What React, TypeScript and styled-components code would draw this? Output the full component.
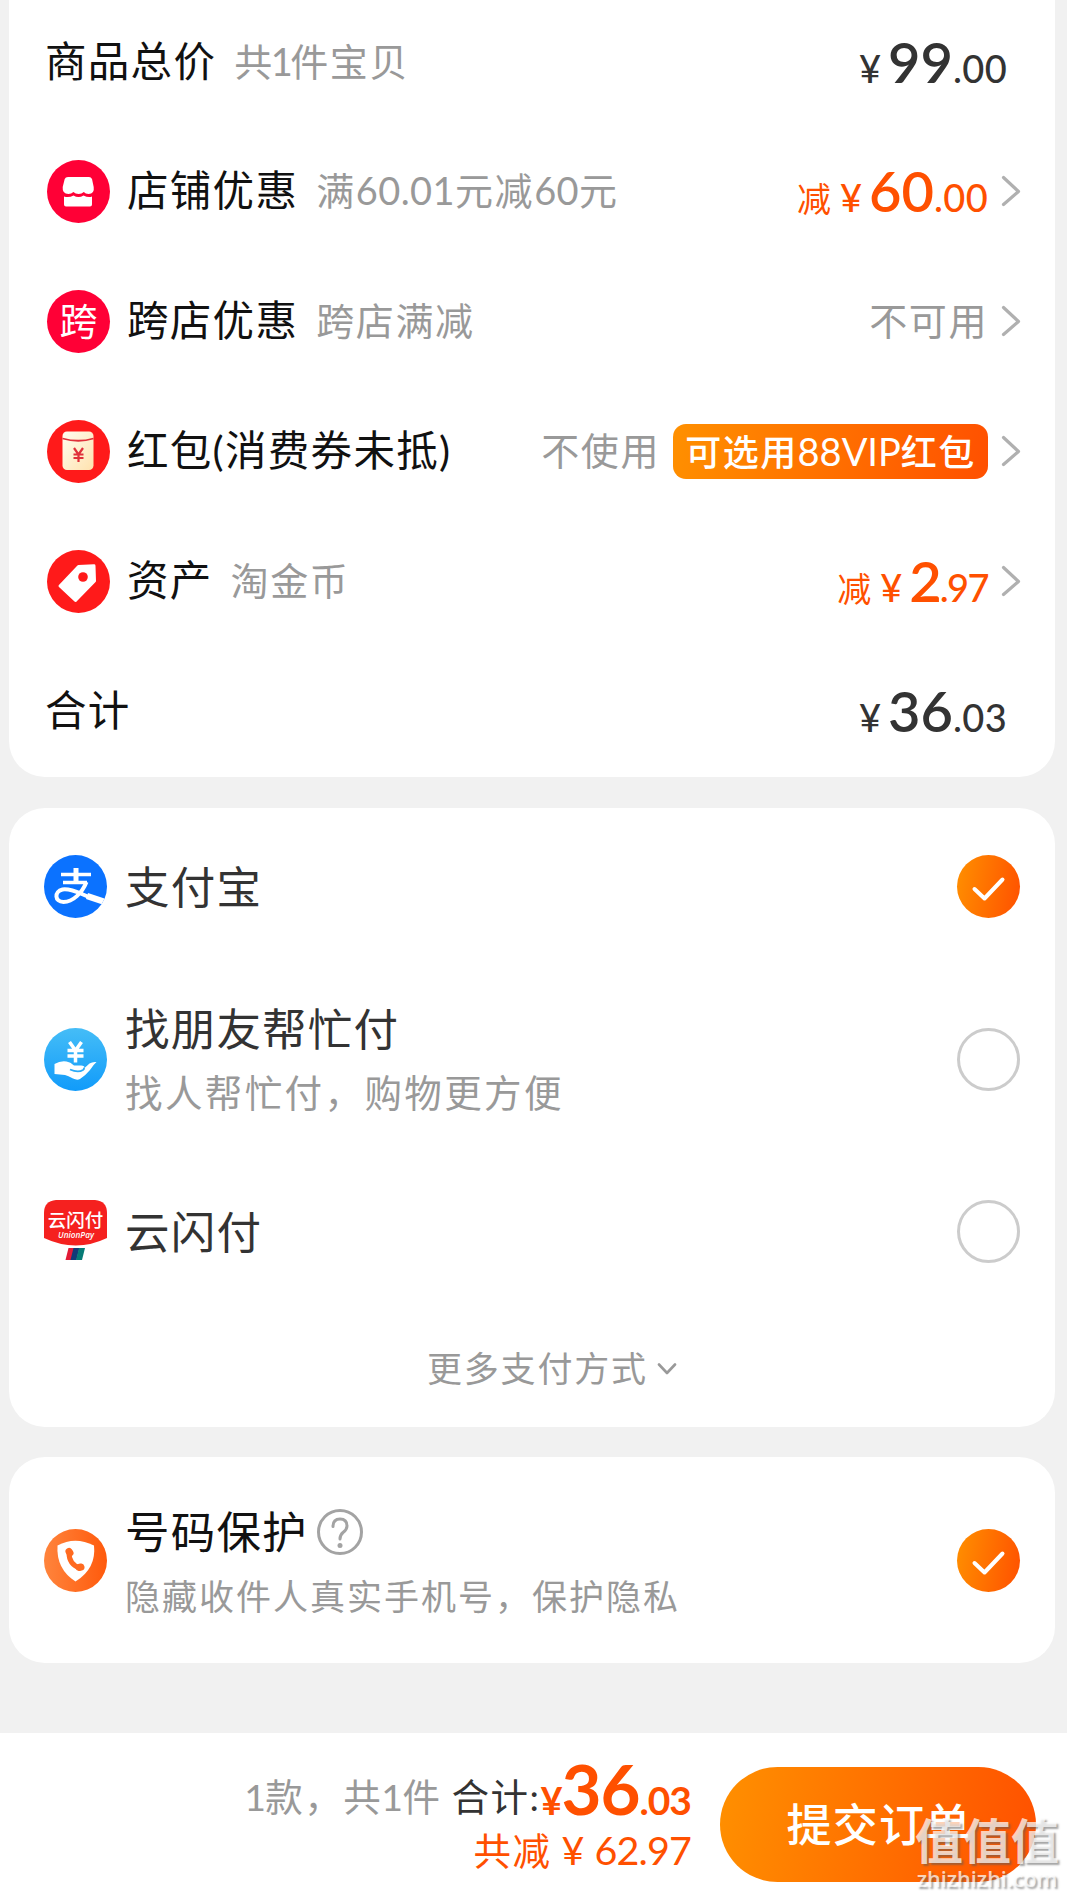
import React from "react";
import styled, { createGlobalStyle } from "styled-components";

const Global = createGlobalStyle`
  * { box-sizing: border-box; }
  body {
    margin: 0;
    background: #f1f1f1;
    font-family: Lato, "Noto Sans CJK SC", sans-serif;
    color: #111;
  }
  svg { display: block; flex: none; }
`;

const Page = styled.main`
  width: 1067px;
  height: 1899px;
  display: flex;
  flex-direction: column;
  overflow: hidden;
  background: #f1f1f1;
`;

const Card = styled.section<{ $h: number; $gap?: number; $flatTop?: boolean }>`
  flex: none;
  width: 1046px;
  height: ${(p) => p.$h}px;
  margin: ${(p) => p.$gap ?? 0}px 0 0 9px;
  background: #fff;
  border-radius: ${(p) => (p.$flatTop ? "0 0 36px 36px" : "36px")};
  display: flex;
  flex-direction: column;
`;

const Row = styled.div<{ $h?: number; $left?: number; $right?: number; $below?: number }>`
  flex: none;
  height: ${(p) => p.$h ?? 130}px;
  margin-bottom: ${(p) => p.$below ?? 0}px;
  padding: 0 ${(p) => p.$right ?? 34}px 0 ${(p) => p.$left ?? 38}px;
  display: flex;
  align-items: center;
`;

const Label = styled.span<{ $icon?: boolean }>`
  margin-left: ${(p) => (p.$icon ? 17 : -2)}px;
  margin-bottom: 2px;
  font-size: 41.5px;
  line-height: 60px;
  letter-spacing: 1.3px;
  white-space: nowrap;
`;

const Hint = styled.span`
  margin-left: 18px;
  margin-bottom: 2px;
  font-size: 38px;
  line-height: 60px;
  letter-spacing: 1.6px;
  color: #999;
  white-space: nowrap;
`;

const Digits = styled.span<{ $nudge?: number }>`
  letter-spacing: 0.4px;
  margin: 0 ${(p) => p.$nudge ?? 0}px;
`;

const Side = styled.div<{ $gap: number }>`
  margin-left: auto;
  display: flex;
  align-items: center;
  gap: ${(p) => p.$gap}px;
`;

const Price = styled.span<{ $accent?: boolean }>`
  display: flex;
  align-items: baseline;
  height: 60px;
  margin-bottom: 2px;
  line-height: 62px;
  color: ${(p) => (p.$accent ? "#ff5000" : "#333")};
`;
const Cut = styled.span`
  font-size: 34px;
  margin-right: 9px;
`;
const Yen = styled.span`
  font-size: 38px;
  font-weight: 500;
  margin-right: 7px;
`;
const Whole = styled.span`
  font-size: 56px;
  font-weight: 600;
`;
const Cents = styled.span<{ $tight?: boolean }>`
  font-size: 38px;
  font-weight: 500;
  letter-spacing: ${(p) => (p.$tight ? -1.6 : 0.3)}px;
  margin-left: ${(p) => (p.$tight ? -2 : 0)}px;
`;

const Coupon = styled.span`
  width: 315px;
  height: 55px;
  border-radius: 13px;
  background: linear-gradient(100deg, #ff9000, #ff5000);
  color: #fff;
  display: flex;
  align-items: baseline;
  justify-content: center;
  font-size: 36px;
  font-weight: 500;
  line-height: 54px;
  letter-spacing: 1.4px;
  white-space: nowrap;
`;
const Vip = styled.span`
  font-size: 38px;
  font-weight: 400;
  letter-spacing: 0;
`;

const Titles = styled.div<{ $drop?: number }>`
  margin-left: 18px;
  padding-top: ${(p) => p.$drop ?? 0}px;
  display: flex;
  flex-direction: column;
`;
const Title = styled.div<{ $strong?: boolean }>`
  display: flex;
  align-items: center;
  gap: 9px;
  font-size: 44.5px;
  line-height: 66px;
  letter-spacing: 1.2px;
  color: ${(p) => (p.$strong ? "#111" : "#333")};
`;
const Sub = styled.div<{ $small?: boolean }>`
  font-size: ${(p) => (p.$small ? 35 : 37.5)}px;
  line-height: 62px;
  letter-spacing: ${(p) => (p.$small ? 2 : 2.4)}px;
  color: #999;
  white-space: nowrap;
`;

const Radio = styled.span`
  width: 63px;
  height: 63px;
  margin-left: auto;
  border: 3px solid #ccc;
  border-radius: 50%;
`;
const Checked = styled.span`
  width: 63px;
  height: 63px;
  margin-left: auto;
  border-radius: 50%;
  background: linear-gradient(100deg, #ff9000, #ff5000);
`;

const More = styled.div`
  display: flex;
  align-items: center;
  height: 60px;
  margin: 27px 0 0 418px;
  gap: 9px;
  font-size: 35px;
  letter-spacing: 1.8px;
  color: #999;

  svg { margin-top: 5px; }
`;

const Bar = styled.footer`
  position: relative;
  margin-top: auto;
  height: 166px;
  background: #fff;
  display: flex;
  padding-right: 31px;
  justify-content: flex-end;
`;
const Summary = styled.div`
  margin-right: 29px;
  display: flex;
  flex-direction: column;
  align-items: flex-end;
`;
const TotalLine = styled.div`
  height: 96px;
  line-height: 112px;
  white-space: nowrap;
`;
const Count = styled.span<{ $dark?: boolean }>`
  color: ${(p) => (p.$dark ? "#333" : "#999")};
  margin-right: ${(p) => (p.$dark ? 0 : 10)}px;
  font-size: 37.5px;
  line-height: 40px;
  letter-spacing: 1.5px;
  vertical-align: 4px;
`;
const Hot = styled.span<{ $size: number }>`
  color: #ff5000;
  font-weight: 700;
  font-size: ${(p) => p.$size}px;
  letter-spacing: -1px;
`;
const SavedLine = styled.div`
  display: flex;
  align-items: baseline;
  gap: 10px;
  height: 60px;
  line-height: 42px;
  font-size: 39.5px;
  color: #ff5000;
`;
const SavedLabel = styled.span`
  font-size: 37.5px;
  letter-spacing: 1.5px;
`;
const SavedSum = styled.span`
  letter-spacing: -0.9px;
`;
const Submit = styled.button`
  width: 316px;
  height: 115px;
  margin-top: 34px;
  padding: 0 0 4px 2px;
  border: 0;
  border-radius: 58px;
  background: linear-gradient(100deg, #ff9000, #ff5000);
  color: #fff;
  font-family: inherit;
  font-size: 45px;
  font-weight: 500;
  letter-spacing: 1.3px;
`;
const Watermark = styled.div`
  position: absolute;
  left: 914px;
  top: 83px;
  width: 146px;
  display: flex;
  flex-direction: column;
  align-items: center;
  color: rgba(255, 255, 255, 0.72);
  text-shadow: 2px 2px 2px rgba(90, 90, 90, 0.55);
  white-space: nowrap;
`;
const MarkTop = styled.span`
  font-size: 48px;
  font-weight: 700;
  line-height: 50px;
`;
const MarkBottom = styled.span`
  font-family: "Open Sans", sans-serif;
  font-size: 21.6px;
  font-weight: 600;
  line-height: 26px;
`;

const Chevron = () => (
  <svg width="20" height="32" viewBox="0 0 20 32" fill="none" stroke="#b0b0b0" strokeWidth="3.2" strokeLinecap="round" strokeLinejoin="round">
    <path d="M2.500 2.500 17.500 16.500 2.500 29.500" />
  </svg>
);

const Tick = () => (
  <Checked>
    <svg width="63" height="63" viewBox="0 0 63 63" fill="none" stroke="#fff" strokeWidth="4" strokeLinecap="round" strokeLinejoin="round">
      <path d="M17.500 34 27.500 43.500 45.500 24.500" />
    </svg>
  </Checked>
);

const ShopIcon = () => (
  <svg width="63" height="63" viewBox="0 0 63 63">
    <circle cx="31.500" cy="31.500" r="31.500" fill="#ff0036" />
    <path fill="#fff" d="M21 17h21q2 0 3 2l1.700 8q1 7-5.200 7-3 0-4.700-2-2 2-5.200 2t-5.200-2q-2 2-5 2-6.300 0-5.700-7l2-8q.8-2 3.300-2z" />
    <path fill="#fff" d="M17 36.500q5 1.500 9.500-1 5 3 10 0 5 2.500 8.500 1v8q0 2-2 2H19q-2 0-2-2z" />
  </svg>
);

const GlyphBadge = styled.span`
  width: 63px;
  height: 63px;
  border-radius: 50%;
  background: #ff0036;
  color: #fff;
  font-size: 38px;
  line-height: 61px;
  text-align: center;
`;

const EnvelopeIcon = () => (
  <svg width="63" height="63" viewBox="0 0 63 63">
    <defs>
      <linearGradient id="paper" x1="0" y1="0" x2="1" y2="1">
        <stop offset="0" stopColor="#fffdf0" />
        <stop offset="1" stopColor="#ffe2ae" />
      </linearGradient>
    </defs>
    <circle cx="31.500" cy="31.500" r="31.500" fill="#ff1a1a" />
    <rect x="15.500" y="11.500" width="31" height="38.500" rx="4.500" fill="url(#paper)" />
    <path d="M15.500 18.500q16 4.500 31 0" fill="none" stroke="#e0303a" strokeWidth="1.800" />
    <path d="M27 28l4.500 6.500L36 28M31.500 34.500v7.500M26.500 34.500h10M26.500 38h10" fill="none" stroke="#e0303a" strokeWidth="2.200" />
  </svg>
);

const TagIcon = () => (
  <svg width="63" height="63" viewBox="0 0 63 63">
    <circle cx="31.500" cy="31.500" r="31.500" fill="#ff1a1a" />
    <path fill="#fff" stroke="#fff" strokeWidth="3" strokeLinejoin="round" d="M31.500 16.500 47 15.800 47.500 31 28.500 50.500 13 36z" />
    <circle cx="36" cy="27" r="4.800" fill="#ff1a1a" />
  </svg>
);

const AlipayIcon = () => (
  <svg width="63" height="63" viewBox="0 0 63 63">
    <defs><clipPath id="disc"><circle cx="31.500" cy="31.500" r="31.500" /></clipPath></defs>
    <circle cx="31.500" cy="31.500" r="31.500" fill="#0b72ff" />
    <g clipPath="url(#disc)" fill="none" stroke="#fff" strokeWidth="4">
      <path d="M32 13v14" strokeWidth="5" />
      <path d="M17 19.500h30M19 27.500h24" strokeWidth="3.400" />
      <path d="M42.500 27C38 38 29 47 19.500 47c-9 0-9.500-10.500-1-12.500C26.500 33 36 38.500 45 42" />
      <path d="M43 41l18 6" strokeWidth="6.500" />
    </g>
  </svg>
);

const FriendIcon = () => (
  <svg width="63" height="63" viewBox="0 0 63 63">
    <defs>
      <linearGradient id="sky" x1="0" y1="0" x2="0" y2="1">
        <stop offset="0" stopColor="#45bdf7" />
        <stop offset="1" stopColor="#119bfa" />
      </linearGradient>
    </defs>
    <circle cx="31.500" cy="31.500" r="31.500" fill="url(#sky)" />
    <path d="M25.500 14l6 8.500L37.500 14M31.500 22v12.500M23.500 22.500h16M23.500 28h16" fill="none" stroke="#fff" strokeWidth="3.500" />
    <path fill="#fff" d="M10.500 36q6-3.500 12-2.500 4 .7 7.500 4h7q4 0 3.500 2.500l5-4.500q3-2 7-1.500-3 2.500-6.500 8-5 6-10 9-3 1.500-7-.5-5-3-8-3.500-5-.5-10.500-1z" />
    <path d="M26 41.500q8 3.500 13 .5 1.500-1 1-2.500" fill="none" stroke="#2aaaf8" strokeWidth="1.800" />
  </svg>
);

const UnionPayIcon = () => (
  <svg width="63" height="63" viewBox="0 0 63 63">
    <path fill="#f5211f" d="M12 0h39q12 1 12 13v25Q32 53 0 38V13Q0 1 12 0z" />
    <text x="31.500" y="26.500" fill="#fff" fontSize="18.500" fontWeight="500" textAnchor="middle" fontFamily="Noto Sans CJK SC">云闪付</text>
    <text x="32" y="37.500" fill="#fff" fontSize="8.200" fontStyle="italic" fontWeight="600" textAnchor="middle" fontFamily="Open Sans">UnionPay</text>
    <path fill="#e21b36" d="M24.500 48h6l-3 12h-6z" />
    <path fill="#123a78" d="M29.500 48h6l-3 12h-6z" />
    <path fill="#067b76" d="M35 48h6l-3 12h-6z" />
  </svg>
);

const ShieldIcon = () => (
  <svg width="63" height="63" viewBox="0 0 63 63">
    <defs>
      <linearGradient id="amber" x1="0" y1="0.500" x2="1" y2="0.500">
        <stop offset="0" stopColor="#ff843c" />
        <stop offset="1" stopColor="#ff5a0c" />
      </linearGradient>
    </defs>
    <circle cx="31.500" cy="31.500" r="31.500" fill="url(#amber)" />
    <path fill="#fff" d="M13.500 16.500Q31 7 50 16.500q2.500 23-18.500 36Q12 40 13.500 16.500z" />
    <path fill="none" stroke="#ff6a20" strokeLinecap="round" strokeWidth="5" d="M25 24q0 11 10.500 15" />
    <path fill="none" stroke="#ff6a20" strokeLinecap="round" strokeWidth="7" d="M25 22.500l1 1.500M35 38.500l2-.5" />
  </svg>
);

const HelpIcon = () => (
  <svg width="46" height="46" viewBox="0 0 46 46" fill="none" stroke="#a3a3a3" strokeWidth="3" strokeLinecap="round">
    <circle cx="23" cy="23" r="21.500" />
    <path d="M16 17.500Q16 10 23 10t7 7q0 3.500-4 6.500-3 2.500-3 6.500" />
    <circle cx="23" cy="36.500" r="2.500" fill="#a3a3a3" stroke="none" />
  </svg>
);

const DownIcon = () => (
  <svg width="20" height="12" viewBox="0 0 20 12" fill="none" stroke="#999" strokeWidth="2.600" strokeLinecap="round" strokeLinejoin="round">
    <path d="M2 1.500 10 10 18 1.500" />
  </svg>
);

type MoneyProps = { whole: string; cents: string; cut?: boolean; accent?: boolean; tight?: boolean };

const Money = ({ whole, cents, cut, accent, tight }: MoneyProps) => (
  <Price $accent={accent}>
    {cut && <Cut>减</Cut>}
    <Yen>¥</Yen>
    <Whole>{whole}</Whole>
    <Cents $tight={tight}>.{cents}</Cents>
  </Price>
);

export default function App() {
  return (
    <Page>
      <Global />
      <Card $h={777} $flatTop>
        <Row $h={123} $right={48} $below={3}>
          <Label>商品总价</Label>
          <Hint>共<Digits $nudge={-3}>1</Digits>件宝贝</Hint>
          <Side $gap={0}><Money whole="99" cents="00" /></Side>
        </Row>
        <Row>
          <ShopIcon />
          <Label $icon>店铺优惠</Label>
          <Hint>满<Digits>60.01</Digits>元减<Digits>60</Digits>元</Hint>
          <Side $gap={13}><Money whole="60" cents="00" cut accent /><Chevron /></Side>
        </Row>
        <Row>
          <GlyphBadge>跨</GlyphBadge>
          <Label $icon>跨店优惠</Label>
          <Hint>跨店满减</Hint>
          <Side $gap={13}><Hint>不可用</Hint><Chevron /></Side>
        </Row>
        <Row>
          <EnvelopeIcon />
          <Label $icon>红包(消费券未抵)</Label>
          <Side $gap={13}>
            <Hint>不使用</Hint>
            <Coupon>可选用<Vip>88VIP</Vip>红包</Coupon>
            <Chevron />
          </Side>
        </Row>
        <Row>
          <TagIcon />
          <Label $icon>资产</Label>
          <Hint>淘金币</Hint>
          <Side $gap={13}><Money whole="2" cents="97" cut accent tight /><Chevron /></Side>
        </Row>
        <Row $right={48}>
          <Label>合计</Label>
          <Side $gap={0}><Money whole="36" cents="03" /></Side>
        </Row>
      </Card>

      <Card $h={619} $gap={31}>
        <Row $h={157} $left={35} $right={35}>
          <AlipayIcon />
          <Titles><Title>支付宝</Title></Titles>
          <Tick />
        </Row>
        <Row $h={189} $left={35} $right={35}>
          <FriendIcon />
          <Titles>
            <Title>找朋友帮忙付</Title>
            <Sub>找人帮忙付，购物更方便</Sub>
          </Titles>
          <Radio />
        </Row>
        <Row $h={155} $left={35} $right={35}>
          <UnionPayIcon />
          <Titles><Title>云闪付</Title></Titles>
          <Radio />
        </Row>
        <More>更多支付方式<DownIcon /></More>
      </Card>

      <Card $h={206} $gap={30}>
        <Row $h={206} $left={35} $right={35}>
          <ShieldIcon />
          <Titles $drop={5}>
            <Title $strong>号码保护<HelpIcon /></Title>
            <Sub $small>隐藏收件人真实手机号，保护隐私</Sub>
          </Titles>
          <Tick />
        </Row>
      </Card>

      <Bar>
        <Summary>
          <TotalLine>
            <Count><Digits $nudge={-1}>1</Digits>款，共<Digits $nudge={-1}>1</Digits>件</Count>
            <Count $dark>合计:</Count>
            <Hot $size={38}>¥</Hot><Hot $size={69}>36</Hot><Hot $size={39}>.03</Hot>
          </TotalLine>
          <SavedLine><SavedLabel>共减</SavedLabel><span>¥</span><SavedSum>62.97</SavedSum></SavedLine>
        </Summary>
        <Submit>提交订单</Submit>
        <Watermark>
          <MarkTop>值值值</MarkTop>
          <MarkBottom>zhizhizhi.com</MarkBottom>
        </Watermark>
      </Bar>
    </Page>
  );
}
